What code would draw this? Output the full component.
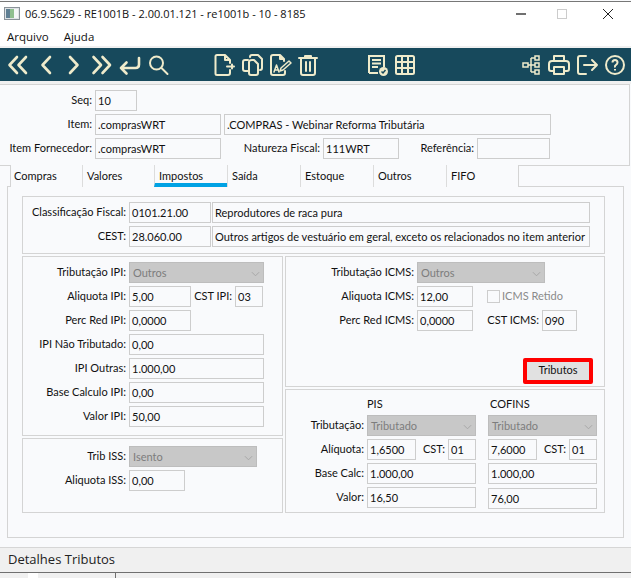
<script>
</script>

<div class="app">
  <div class="titlebar">
    <svg class="appicon" viewBox="0 0 16 13" width="16" height="13" aria-hidden="true">
      <rect x="0.5" y="0.5" width="15" height="12" fill="#dfe3e6" stroke="#8a9299"/>
      <rect x="2" y="2" width="4" height="9" fill="#5f7f93"/>
      <rect x="6" y="2" width="4" height="9" fill="#8fbf8f"/>
      <rect x="10" y="2" width="4" height="9" fill="#f4f6f7"/>
    </svg>
    <span class="title">06.9.5629 - RE1001B - 2.00.01.121 - re1001b - 10 - 8185</span>
    <span class="winbtns">
      <svg width="14" height="12" viewBox="0 0 14 12" class="min"><path d="M3 6h10" stroke="#111" stroke-width="1.2"/></svg>
      <svg width="12" height="12" viewBox="0 0 12 12" class="max"><rect x="1.5" y="1.5" width="9" height="9" fill="none" stroke="#ccc"/></svg>
      <svg width="12" height="12" viewBox="0 0 12 12" class="cls"><path d="M1 1l10 10M11 1L1 11" stroke="#222" stroke-width="1"/></svg>
    </span>
  </div>

  <div class="menu"><span>Arquivo</span><span>Ajuda</span></div>

  <div class="toolbar">
    <svg class="tb" viewBox="0 0 24 24"><path d="M11 4L3.500 12l7.500 8M20 4l-7.500 8 7.500 8"/></svg>
    <svg class="tb" viewBox="0 0 24 24"><path d="M16 4l-7.500 8 7.500 8"/></svg>
    <svg class="tb" viewBox="0 0 24 24"><path d="M8 4l7.500 8-7.500 8"/></svg>
    <svg class="tb" viewBox="0 0 24 24"><path d="M3.500 4l7.500 8-7.500 8M12.500 4l7.500 8-7.500 8"/></svg>
    <svg class="tb" viewBox="0 0 24 24"><path d="M21 5v6.500q0 3.500-3.500 3.500H3M8.500 9.500L3 15l5.500 5.500"/></svg>
    <svg class="tb thin" viewBox="0 0 24 24"><circle cx="10.500" cy="10" r="6.500"/><path d="M15.500 15l6 6"/></svg>
    <span class="s1"></span>
    <svg class="tb thin" viewBox="0 0 24 24"><path d="M18 10V7l-5-5H5q-1.500 0-1.500 1.500v17Q3.500 22 5 22h11q2 0 2-2v-3M13 2v5h5M15 13.500h7M20 11.500v4"/></svg>
    <svg class="tb thin" viewBox="0 0 24 24"><path d="M9 18H5q-2 0-2-2V9q0-2 2-2h3M14 2h4l4 4v9q0 2-2 2"/><path d="M10 4q0-2 2-2h2M12 7h2l4 4v9q0 2-2 2h-5q-2 0-2-2V9q0-2 3-2z"/></svg>
    <svg class="tb thin" viewBox="0 0 24 24"><path d="M16 8V6l-4-4H5Q3 2 3 4v16q0 2 2 2h10q2 0 2-2v-2M12 2v4h4"/><path d="M6 19l2.500-7 2.500 7M7 17h3" stroke-width="1.500"/><path d="M12 18l1-3 8-7 2 2-8 7z" stroke-width="1.500"/></svg>
    <svg class="tb thin" viewBox="0 0 24 24"><path d="M3 5h18M9 5V3h6v2M5 5v15q0 2 2 2h10q2 0 2-2V5M10 9v9M14 9v9"/></svg>
    <span class="s2"></span>
    <svg class="tb doc" viewBox="0 0 24 24"><path d="M4 20V3h15v11M4 20h9M7 7h9M7 10.500h9M7 14h6"/><circle class="solid" cx="18.500" cy="18.500" r="4.500"/><path class="tick" d="M16.500 18.500l1.500 1.500 2.500-3"/></svg>
    <svg class="tb doc" viewBox="0 0 24 24"><rect x="3" y="3" width="18" height="18" rx="1.500"/><path d="M9 3v18M15 3v18M3 9h18M3 15h18"/></svg>
    <span class="s3"></span>
    <svg class="tb doc tree" viewBox="0 0 24 24"><rect x="4" y="10" width="5" height="4"/><rect x="16" y="3" width="4" height="4"/><rect x="16" y="10" width="4" height="4"/><rect x="16" y="17" width="4" height="4"/><path d="M9 12h7M12 5v14M12 5h4M12 19h4"/></svg>
    <svg class="tb thin" viewBox="0 0 24 24"><path d="M7 8V3h10v5M6 18H4q-2 0-2-2v-5q0-3 3-3h14q3 0 3 3v5q0 2-2 2h-2M7 14h10v7H7z"/></svg>
    <svg class="tb thin" viewBox="0 0 24 24"><path d="M11 3H5Q3 3 3 5v14q0 2 2 2h6M9 12h13M17 7l5 5-5 5"/></svg>
    <svg class="tb doc" viewBox="0 0 24 24"><circle cx="12" cy="12" r="9"/><path d="M9.500 9.500q0-2.500 2.500-2.500t2.500 2.500q0 1.500-1.500 2.300t-1 2.700M12 16v1.500"/></svg>
  </div>

  <div class="header">
    <div class="row"><span class="lbl">Seq:</span><div class="f w42">10</div></div>
    <div class="row"><span class="lbl">Item:</span><div class="f w126">.comprasWRT</div><div class="f w327">.COMPRAS - Webinar Reforma Tributária</div></div>
    <div class="row"><span class="lbl">Item Fornecedor:</span><div class="f w126">.comprasWRT</div>
      <span class="lbl natureza">Natureza Fiscal:</span><div class="f w76">111WRT</div>
      <span class="lbl referencia">Referência:</span><div class="f w73"></div></div>
  </div>

  <div class="tabs">
    <div class="tab">Compras</div>
    <div class="tab">Valores</div>
    <div class="tab on">Impostos</div>
    <div class="tab">Saída</div>
    <div class="tab">Estoque</div>
    <div class="tab">Outros</div>
    <div class="tab last">FIFO</div>
  </div>

  <div class="panel">
    <section class="box fiscal">
      <div class="row"><span class="lbl">Classificação Fiscal:</span><div class="f w82">0101.21.00</div><div class="f w378">Reprodutores de raca pura</div></div>
      <div class="row"><span class="lbl">CEST:</span><div class="f w82">28.060.00</div><div class="f w378">Outros artigos de vestuário em geral, exceto os relacionados no item anterior</div></div>
    </section>

    <div class="cols">
      <div class="col left">
        <section class="box ipi">
          <div class="row"><span class="lbl">Tributação IPI:</span><div class="f sel w135">Outros<svg class="chev" viewBox="0 0 10 6"><path d="M1 1l4 4 4-4"/></svg></div></div>
          <div class="row"><span class="lbl">Aliquota IPI:</span><div class="f w62">5,00</div><span class="lbl cstipi">CST IPI:</span><div class="f w28">03</div></div>
          <div class="row"><span class="lbl">Perc Red IPI:</span><div class="f w62">0,0000</div></div>
          <div class="row"><span class="lbl">IPI Não Tributado:</span><div class="f w135">0,00</div></div>
          <div class="row"><span class="lbl">IPI Outras:</span><div class="f w135">1.000,00</div></div>
          <div class="row"><span class="lbl">Base Calculo IPI:</span><div class="f w135">0,00</div></div>
          <div class="row"><span class="lbl">Valor IPI:</span><div class="f w135">50,00</div></div>
        </section>
        <section class="box iss">
          <div class="row"><span class="lbl">Trib ISS:</span><div class="f sel w128">Isento<svg class="chev" viewBox="0 0 10 6"><path d="M1 1l4 4 4-4"/></svg></div></div>
          <div class="row"><span class="lbl">Aliquota ISS:</span><div class="f w56">0,00</div></div>
        </section>
      </div>

      <div class="col right">
        <section class="box icms">
          <div class="row"><span class="lbl">Tributação ICMS:</span><div class="f sel w128">Outros<svg class="chev" viewBox="0 0 10 6"><path d="M1 1l4 4 4-4"/></svg></div></div>
          <div class="row"><span class="lbl">Aliquota ICMS:</span><div class="f w56">12,00</div><span class="check"></span><span class="retido">ICMS Retido</span></div>
          <div class="row"><span class="lbl">Perc Red ICMS:</span><div class="f w56">0,0000</div><span class="lbl csticms">CST ICMS:</span><div class="f w35">090</div></div>
          <div class="btnrow"><div class="btn">Tributos</div></div>
        </section>
        <section class="box pis">
          <div class="row heads"><span class="lbl"></span><span class="head h1">PIS</span><span class="head">COFINS</span></div>
          <div class="row"><span class="lbl">Tributação:</span>
            <div class="f sel w109">Tributado<svg class="chev" viewBox="0 0 10 6"><path d="M1 1l4 4 4-4"/></svg></div>
            <div class="f sel w109 c2">Tributado<svg class="chev" viewBox="0 0 10 6"><path d="M1 1l4 4 4-4"/></svg></div></div>
          <div class="row"><span class="lbl">Alíquota:</span>
            <div class="f w49">1,6500</div><span class="lbl cst">CST:</span><div class="f w28">01</div>
            <div class="f w49 c2">7,6000</div><span class="lbl cst">CST:</span><div class="f w28">01</div></div>
          <div class="row"><span class="lbl">Base Calc:</span><div class="f w109">1.000,00</div><div class="f w109 c2">1.000,00</div></div>
          <div class="row"><span class="lbl">Valor:</span><div class="f w109">16,50</div><div class="f w109 c2 drop">76,00</div></div>
        </section>
      </div>
    </div>
  </div>

  <div class="status">Detalhes Tributos</div>
  <div class="foot"><span class="foot-a"></span><span class="foot-b"></span></div>
</div>

<style>
  :global(body) { margin: 0; background: #f9fafc; }
  .app {
    width: 631px; height: 578px; overflow: hidden; display: flex; flex-direction: column;
    background: #f9fafc; color: #111;
    font: 11px/15px Lato, "Open Sans", sans-serif;
  }
  .titlebar {
    height: 23px; padding-bottom: 3px; margin-top: 1px; flex: none; display: flex; align-items: center;
    background: #fff; border-top: 1px solid #777;
    padding-left: 4px; font: 11px/15px "Open Sans", sans-serif;
  }
  .appicon { margin-right: 5px; }
  .title { flex: 1; }
  .winbtns { display: flex; align-items: center; width: 118px; }
  .winbtns .min { margin-right: 29px; }
  .winbtns .max { margin-right: 34px; }
  .menu {
    height: 16px; padding-bottom: 2px; flex: none; background: #fff; display: flex; gap: 15px; padding-left: 7px;
    font: 11.500px/15px "Open Sans", sans-serif; align-items: center;
  }
  .toolbar {
    margin-top: 2px; height: 33px; flex: none; display: flex; align-items: center;
    background: #17495c; padding-left: 4px;
    box-shadow: 0 -2px 0 #f0f0f0, 0 3px 0 #f0f0f0;
  }
  .tb {
    width: 24px; height: 24px; padding: 0 2px; flex: none; fill: none; stroke: #efebcb;
    stroke-width: 2.600; stroke-linecap: round; stroke-linejoin: round; box-sizing: content-box;
  }
  .tb.thin { stroke-width: 2; }
  .tb.doc { stroke-width: 2; stroke-linecap: butt; stroke-linejoin: miter; }
  .tb.tree { stroke-width: 1.500; }
  .tb .solid { fill: #efebcb; stroke: none; }
  .tb .tick { stroke: #17495c; stroke-width: 1.500; }
  .s1 { width: 38px; flex: none; }
  .s2 { width: 41px; flex: none; }
  .s3 { width: 98px; flex: none; }

  .header {
    margin-top: 3px; flex: none; box-sizing: border-box; height: 82px; width: 630px; padding-top: 5px;
    border-top: 1px solid #d4d4d4; border-bottom: 1px solid #d4d4d4; border-right: 1px solid #d4d4d4;
    display: flex; flex-direction: column; gap: 3px;
  }
  .header .lbl { width: 92px; }

  .row { display: flex; height: 21px; flex: none; }
  .lbl {
    flex: none; text-align: right; margin-right: 3px; line-height: 20px; white-space: nowrap;
  }
  .header .natureza { width: 96px; }
  .header .referencia { width: 72px; }

  .f {
    flex: none; box-sizing: border-box; height: 21px; border: 1px solid #cdcdcd; padding: 2px 0 0 2px;
    line-height: 15px; margin-right: 3px; white-space: nowrap; overflow: hidden;
  }
  .w28 { width: 28px; } .w35 { width: 35px; } .w42 { width: 42px; } .w49 { width: 49px; }
  .w56 { width: 56px; } .w62 { width: 62px; } .w73 { width: 73px; } .w76 { width: 76px; }
  .w82 { width: 82px; margin-right: 1px; } .w109 { width: 109px; } .w126 { width: 126px; }
  .w128 { width: 128px; } .w135 { width: 135px; } .w327 { width: 327px; } .w378 { width: 378px; }
  .sel {
    background: #c8c8c8; color: #7d7d7d; border-color: #bdbdbd; position: relative; padding-left: 3px;
  }
  .chev {
    position: absolute; right: 3px; top: 8px; width: 9px; height: 6px; fill: none; stroke: #a4a4a4; stroke-width: 1;
  }

  .tabs {
    flex: none; position: relative; height: 22px; width: 509px; margin: -1px 0 -1px 10px;
    display: grid; grid-template-columns: 72px 72px repeat(5, 73px); background: #f9fafc;
  }
  .tab {
    box-sizing: border-box; border-left: 1px solid #dcdcdc; padding: 2px 0 0 4px;
    height: 22px; line-height: 17px;
  }
  .tab:first-child { padding-left: 3px; border-left-color: #d4d4d4; }
  .tab.on { border-bottom: 4px solid #00a2e4; }
  .tab.last { border-right: 1px solid #d4d4d4; }

  .panel {
    flex: none; box-sizing: border-box; margin-left: 7px; width: 617px; height: 352px;
    border: 1px solid #d4d4d4; padding: 9px 0 0 14px;
  }
  .box { box-sizing: border-box; border: 1px solid #d4d4d4; }
  .fiscal { width: 583px; height: 58px; padding-top: 5px; display: flex; flex-direction: column; gap: 3px; }
  .fiscal .lbl { width: 103px; }
  .cols { display: flex; gap: 2px; margin-top: 2px; }
  .col { display: flex; flex-direction: column; gap: 2px; }
  .left { width: 261px; }
  .right { width: 320px; }
  .ipi, .iss, .icms, .pis { display: flex; flex-direction: column; gap: 3px; padding-top: 5px; }
  .ipi { height: 180px; }
  .iss { height: 75px; padding-top: 7px; }
  .ipi .lbl, .iss .lbl { width: 103px; }
  .ipi .cstipi { width: 38px; }
  .icms { height: 131px; }
  .icms .lbl { width: 128px; }
  .icms .csticms { width: 63px; }
  .check {
    flex: none; box-sizing: border-box; width: 13px; height: 13px; border: 1px solid #cdcdcd;
    margin: 4px 2px 0 11px;
  }
  .retido { color: #8a8a8a; line-height: 20px; }
  .btnrow { display: flex; justify-content: flex-end; padding: 24px 11px 0 0; }
  .btn {
    box-sizing: border-box; width: 70px; height: 26px; border: 4px solid #f00; border-radius: 2px;
    background: #e1e1e1; text-align: center; line-height: 16px;
  }
  .pis { height: 124px; padding-top: 7px; }
  .pis .lbl { width: 78px; }
  .pis .cst { width: 26px; }
  .pis .c2 { margin-left: 9px; }
  .pis .drop { margin-top: 1px; }
  .heads { height: 14px; margin-bottom: 1px; }
  .head { line-height: 14px; }
  .h1 { width: 123px; flex: none; }

  .status {
    margin-top: 9px; flex: none; height: 26px; box-sizing: border-box;
    background: #f0f0f0; border-top: 1px solid #d6d6d6; border-bottom: 1px solid #707070;
    padding: 2px 0 0 8px; font: 13px/18px "Open Sans", sans-serif; color: #222;
  }
  .foot { flex: 1; display: flex; background: #f0f0f0; }
  .foot-a { width: 10px; margin-left: 28px; background: #fff; }
  .foot-b { width: 1px; margin-left: 77px; background: #707070; }
</style>
